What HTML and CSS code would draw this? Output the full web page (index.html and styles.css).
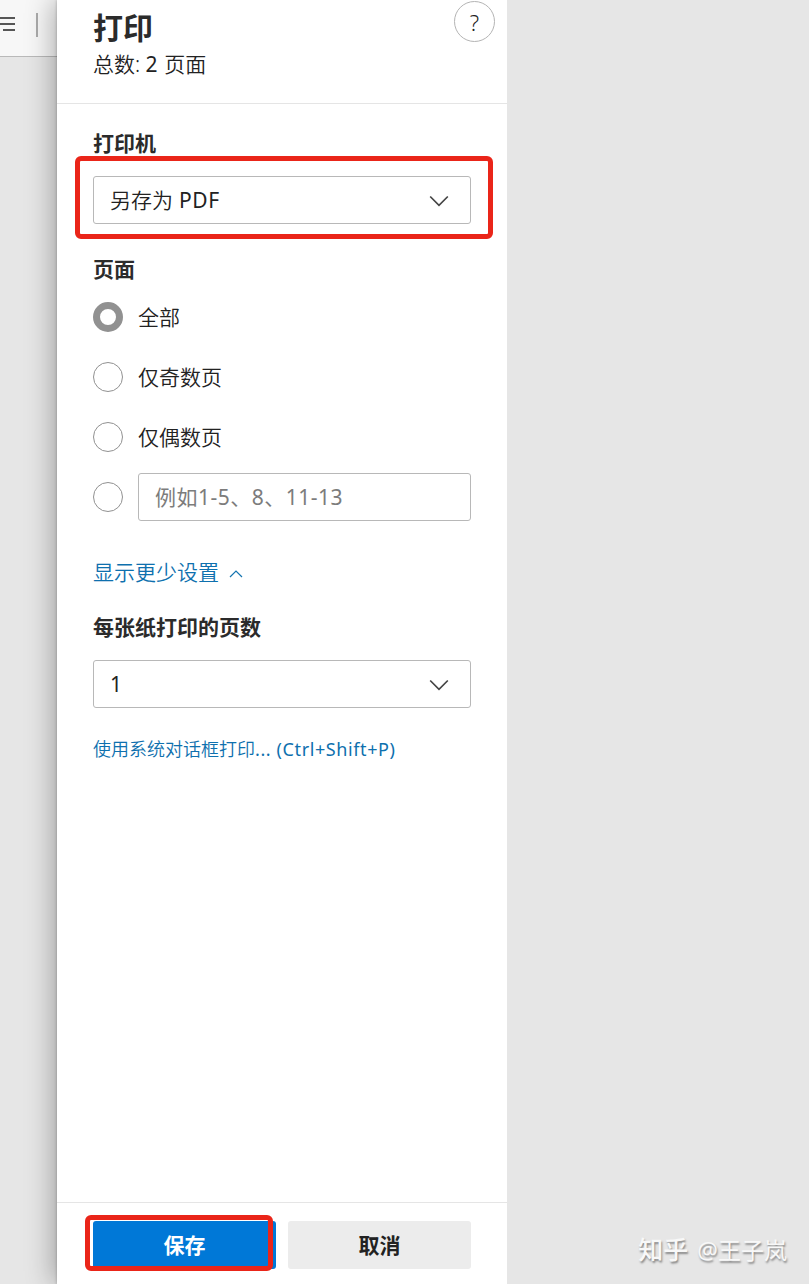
FILE: index.html
```html
<!DOCTYPE html>
<html lang="zh-CN">
<head>
<meta charset="UTF-8">
<meta name="viewport" content="width=device-width, initial-scale=1.0">
<title>打印</title>
<link rel="stylesheet" href="styles.css">
</head>
<body>

<!-- 左侧工具栏 -->
<div class="sidebar">
  <div class="toolbar">
    <svg class="menu-icon" width="16" height="16" viewBox="0 0 16 16"><path d="M0 2H15M0 8H15M3 14H15"/></svg>
    <span class="divider"></span>
  </div>
</div>

<!-- 打印面板 -->
<main class="panel">
  <header class="panel-header">
    <div>
      <h1>打印</h1>
      <p class="total">总数: <span class="latin">2 </span>页面</p>
    </div>
    <button class="help">?</button>
  </header>

  <div class="panel-body">
    <h2>打印机</h2>
    <div class="select printer">
      <span>另存为<span class="latin"> PDF</span></span>
      <svg class="chevron" width="20" height="12" viewBox="0 0 20 12"><path d="M1.2 1.5L10 10.3L18.8 1.5"/></svg>
      <div class="mark mark-printer"></div>
    </div>

    <h2>页面</h2>
    <div class="options">
      <label class="option"><input type="radio" name="pages" checked><span>全部</span></label>
      <label class="option"><input type="radio" name="pages"><span>仅奇数页</span></label>
      <label class="option"><input type="radio" name="pages"><span>仅偶数页</span></label>
      <div class="option">
        <input type="radio" name="pages">
        <input type="text" class="range" placeholder="例如1-5、8、11-13">
      </div>
    </div>

    <a class="more">显示更少设置 <svg width="14" height="8" viewBox="0 0 14 8"><path d="M1 7L7 1L13 7"/></svg></a>

    <h2>每张纸打印的页数</h2>
    <div class="select">
      <span class="latin">1</span>
      <svg class="chevron" width="20" height="12" viewBox="0 0 20 12"><path d="M1.2 1.5L10 10.3L18.8 1.5"/></svg>
    </div>

    <a class="system">使用系统对话框打印<span class="latin">... (Ctrl+Shift+P)</span></a>
  </div>

  <footer class="panel-footer">
    <div class="save-wrap">
      <button class="save">保存</button>
      <div class="mark mark-save"></div>
    </div>
    <button class="cancel">取消</button>
  </footer>
</main>

<!-- 预览区域 -->
<div class="preview">
  <p class="watermark"><span class="site">知乎</span> @王子岚</p>
</div>

</body>
</html>
```
FILE: styles.css
```css
* {
  box-sizing: border-box;
}
body {
  margin: 0;
  height: 100vh;
  display: grid;
  grid-template-columns: 57px 450px 1fr;
  font-family: 'Noto Sans', 'Noto Sans CJK SC', sans-serif;
  font-size: 21px;
  font-weight: 350;
  line-height: 30px;
  color: #222;
  background-color: #e6e6e6;
  overflow: hidden;
}
h1, h2, p {
  margin: 0;
}
button, input {
  font-family: inherit;
  font-size: inherit;
  font-weight: inherit;
  color: inherit;
}
.sidebar {
  background-color: #e6e6e6;
}
.toolbar {
  display: flex;
  align-items: center;
  height: 57px;
  padding-bottom: 8px;
  background-color: #f7f7f7;
  border-bottom: 1px solid #b9b9b9;
}
.menu-icon {
  fill: none;
  stroke: #222;
  stroke-width: 1.6;
}
.divider {
  width: 2px;
  height: 24px;
  margin-top: 1px;
  margin-left: 20px;
  background-color: #aaa;
}
.panel {
  position: relative;
  display: flex;
  flex-direction: column;
  height: 100vh;
  background-color: #fff;
  box-shadow: -4px 0 26px rgba(0, 0, 0, 0.3), 0 0 3px rgba(0, 0, 0, 0.25);
}
.panel-header {
  display: flex;
  justify-content: space-between;
  height: 104px;
  padding: 1px 12px 0 36px;
  border-bottom: 1px solid #e5e5e5;
}
h1 {
  margin-top: 7px;
  font-size: 30px;
  line-height: 40px;
  color: #2b2b2b;
}
.total {
  margin-top: 1px;
}
.latin {
  font-weight: 400;
  letter-spacing: 0.6px;
}
.help {
  width: 41px;
  height: 41px;
  padding: 0;
  font-size: 22px;
  line-height: 36px;
  background-color: #fff;
  border: 1px solid #b4b4b4;
  border-radius: 50%;
}
.panel-body {
  display: flex;
  flex-direction: column;
  flex: 1;
  padding: 24px 36px 0;
}
h2 {
  font-size: 21px;
  line-height: 30px;
  color: #2b2b2b;
}
.select {
  display: flex;
  align-items: center;
  justify-content: space-between;
  height: 48px;
  margin-top: 18px;
  padding: 0 21px 0 16px;
  border: 1px solid #b8b8b8;
  border-radius: 3px;
}
.printer {
  position: relative;
  margin-bottom: 30px;
}
.chevron {
  margin-top: 2px;
  fill: none;
  stroke: #444;
  stroke-width: 1.7;
}
.options {
  display: flex;
  flex-direction: column;
  margin-top: 3px;
}
.option {
  display: flex;
  align-items: center;
  gap: 15px;
  height: 60px;
}
.option input[type="radio"] {
  appearance: none;
  flex: none;
  width: 30px;
  height: 30px;
  margin: 0;
  border: 1px solid #919191;
  border-radius: 50%;
}
.option input[type="radio"]:checked {
  border: 7px solid #919191;
}
.range {
  flex: 1;
  min-width: 0;
  height: 48px;
  padding: 0 16px;
  font-weight: 400;
  letter-spacing: 0.5px;
  border: 1px solid #b8b8b8;
  border-radius: 3px;
}
.range::placeholder {
  color: #7c7c7c;
}
.more {
  display: flex;
  align-items: center;
  gap: 10px;
  margin-top: 30px;
  margin-bottom: 25px;
  color: #0e70ae;
}
.more svg {
  margin-top: 3px;
  fill: none;
  stroke: #1474b0;
  stroke-width: 1.2;
}
.system {
  margin-top: 26px;
  font-size: 18px;
  color: #0e70ae;
}
.panel-footer {
  display: flex;
  gap: 12px;
  padding: 18px 36px 15px;
  border-top: 1px solid #e5e5e5;
}
.save-wrap {
  position: relative;
  flex: 1;
}
.save, .cancel {
  height: 48px;
  padding: 0 0 2px;
  font-weight: bold;
  border: none;
  border-radius: 3px;
}
.save {
  display: block;
  width: 100%;
  color: #fff;
  background-color: #0078d7;
}
.cancel {
  flex: 1;
  background-color: #ececec;
}
/* 红色标注框 */
.mark {
  position: absolute;
  border: 5px solid #ea2519;
  border-radius: 6px;
}
.mark-printer {
  top: -21px;
  right: -23px;
  bottom: -16px;
  left: -19px;
}
.mark-save {
  top: -6px;
  right: 3px;
  bottom: -2px;
  left: -8px;
}
.preview {
  position: relative;
  display: flex;
  align-items: flex-end;
  justify-content: flex-end;
  padding: 0 22px 18px 0;
  background-color: #e6e6e6;
}
.watermark {
  font-size: 23px;
  font-weight: 400;
  line-height: 32px;
  color: #f8f8f8;
  text-shadow: 1px 2px 2px #888;
}
.site {
  margin-right: 3px;
  font-size: 25px;
  font-weight: 500;
}
```
